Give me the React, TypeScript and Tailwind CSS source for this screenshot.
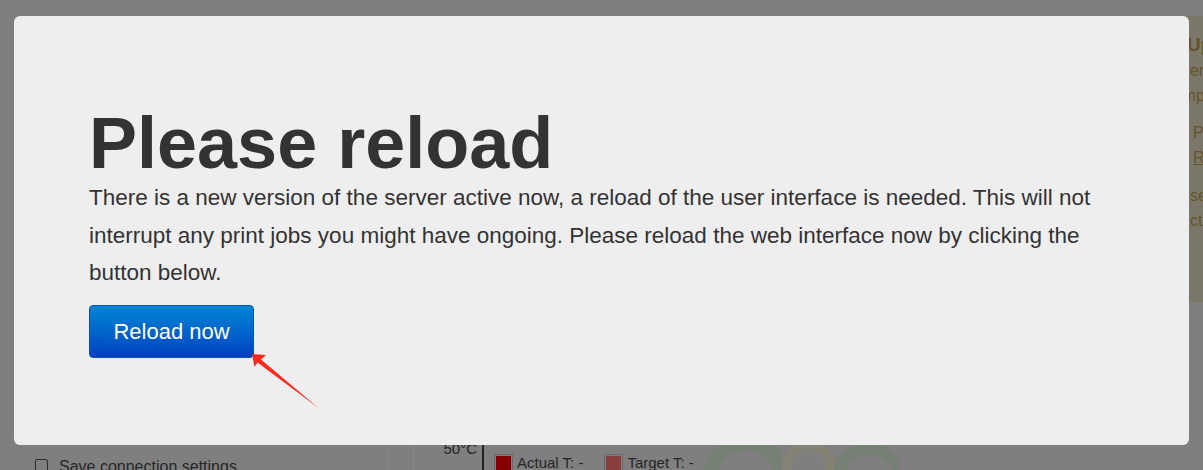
import React from "react";

const panelLines = [
  { text: "Update", cls: "mt-[19px] text-[19px] leading-[20px] font-bold pl-[44px]" },
  { text: "here", cls: "mt-[7px] pl-[38px]" },
  { text: "imp", cls: "mt-[7px] pl-[36px]" },
  { text: "P", cls: "mt-[19px] pl-[50px]" },
  { text: "R", cls: "mt-[7px] pl-[50px] underline" },
  { text: "use", cls: "mt-[20px] pl-[38px]" },
  { text: "ectly", cls: "mt-[7px] pl-[38px]" },
];

function BackgroundPage() {
  return (
    <div className="flex h-full flex-col">
      <div className="flex h-[445px] justify-end pt-[16px]">
        <div className="h-[286px] w-[60px] overflow-hidden rounded-tl-[6px] bg-[#7a7769] text-[16px] leading-[18px] text-[#65542c]">
          {panelLines.map((l) => (
            <div key={l.text} className={`whitespace-nowrap ${l.cls}`}>
              {l.text}
            </div>
          ))}
        </div>
      </div>
      <div className="flex h-[25px] items-stretch text-[#262626]">
        <div className="flex w-[388px] items-start border-r border-[#8a8a8a] pl-[35px] pt-[13px]">
          <span className="mt-[1px] h-[13px] w-[13px] rounded-[2px] border border-[#2e2e2e] bg-[#7f7f7f]" />
          <span className="ml-[11px] text-[16px] leading-[18px]">Save connection settings</span>
        </div>
        <div className="w-[26px] border-r border-[#8a8a8a]" />
        <div className="flex w-[68px] justify-end pr-[5px] text-[15px] leading-[15px]">
          <span className="-mt-[4px]">50°C</span>
        </div>
        <div className="relative flex flex-1 items-start border-l-2 border-[#222222] pl-[10px] pt-[9px]">
          <span className="h-[19px] w-[19px] border border-[#6a6a6a] p-[1px]">
            <span className="block h-full w-full bg-[#860000]" />
          </span>
          <span className="ml-[4px] text-[15px] leading-[18px]">Actual T: -</span>
          <span className="ml-[21px] h-[19px] w-[19px] border border-[#6a6a6a] p-[1px]">
            <span className="block h-full w-full bg-[#8a3d3d]" />
          </span>
          <span className="ml-[4px] text-[15px] leading-[18px]">Target T: -</span>
          <svg
            className="absolute left-[215px] top-0 h-[25px] w-[200px]"
            viewBox="0 0 200 25"
            fill="none"
          >
            <circle cx="47" cy="34" r="36" stroke="#778075" strokeWidth="14" />
            <circle cx="110" cy="22" r="22" stroke="#838274" strokeWidth="10" />
            <circle cx="170" cy="34" r="30" stroke="#778075" strokeWidth="12" />
          </svg>
        </div>
      </div>
    </div>
  );
}

export default function App() {
  return (
    <div className="relative h-[470px] w-[1203px] overflow-hidden bg-[#7f7f7f] font-['Liberation_Sans',Arial,sans-serif]">
      <BackgroundPage />

      <div className="absolute left-[14px] top-[16px] h-[429px] w-[1175px] rounded-[6px] bg-[#eeeeee] px-[75px] pt-[91px] text-[#333333]">
        <h1 className="text-[72px] font-bold leading-none">Please reload</h1>
        <p className="text-[22.5px] leading-[37.5px]">
          There is a new version of the server active now, a reload of the user interface is
          needed. This will not interrupt any print jobs you might have ongoing. Please reload the
          web interface now by clicking the button below.
        </p>
        <button className="mt-[13px] h-[53px] w-[165px] rounded-[4px] border border-[#0a52b0] bg-gradient-to-b from-[#0686d4] to-[#003fc2] text-[22px] text-white">
          Reload now
        </button>
      </div>

      <svg className="absolute left-[248px] top-[350px] h-[62px] w-[74px]" viewBox="248 350 74 62">
        <polygon
          points="252,354 266,355 261,359.5 318.5,408 257.5,362.5 254.5,367"
          fill="#ff2a1f"
        />
      </svg>
    </div>
  );
}
